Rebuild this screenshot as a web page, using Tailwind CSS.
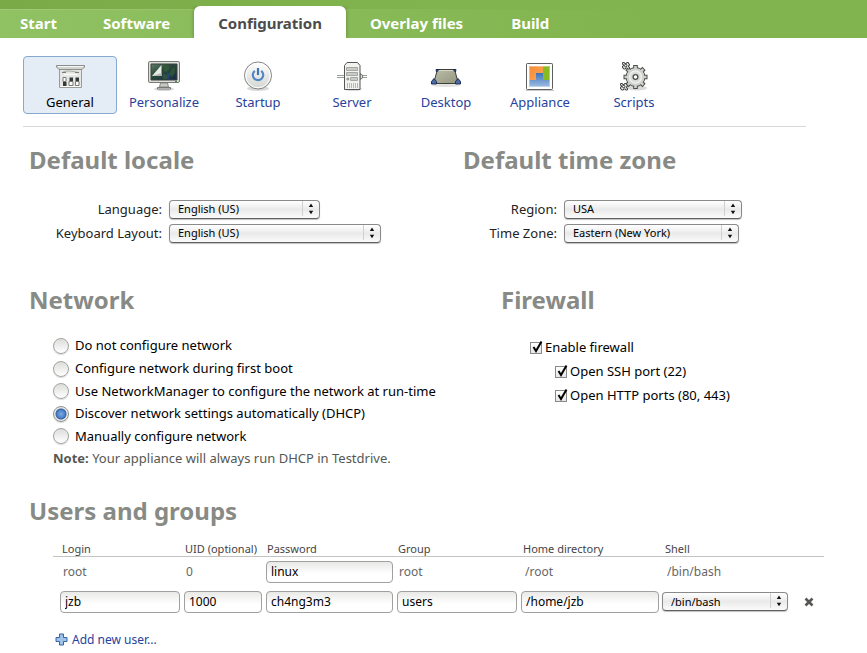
<!DOCTYPE html>
<html lang="en">
<head>
<meta charset="utf-8">
<title>Configuration</title>
<script src="https://cdn.jsdelivr.net/npm/@tailwindcss/browser@4"></script>
</head>
<body class="bg-white font-['Noto_Sans','Open_Sans',sans-serif] text-[13px] leading-5 text-black">
<svg class="hidden" aria-hidden="true">
  <defs>
    <symbol id="arrows" viewBox="0 0 18 18">
      <path d="M.5 1v15" stroke="#d0d0d0" fill="none"/>
      <path d="M9 3.500 11.200 7H6.800zM9 14.200 11.200 10.700H6.800z" fill="#111"/>
    </symbol>
    <symbol id="tick" viewBox="0 0 14 16">
      <path d="M3.500 8 6 12 11.500 2.500" stroke="#000" stroke-width="2" fill="none"/>
    </symbol>
  </defs>
</svg>

<header class="bg-linear-to-r from-[#7aaa48] to-[#81b44e] to-50% pt-[6px]">
  <nav class="flex h-8 overflow-hidden bg-[linear-gradient(to_right,#a0ca78,#81b44e_60%),linear-gradient(to_right,#90c163,#81b44e_75%)] bg-[size:100%_1px,100%_28px] bg-[position:0_3px,0_4px] bg-no-repeat pr-4 text-[15px] font-bold leading-[34px] text-white">
    <a href="#" class="pl-5 pr-[22px]">Start</a>
    <a href="#" class="px-6">Software</a>
    <a href="#" aria-current="page" class="rounded-t-md bg-white px-6 text-[#4c4c4c] shadow-[0_0_4px_rgba(0,0,0,0.3)]">Configuration</a>
    <a href="#" class="px-6">Overlay files</a>
    <a href="#" class="px-6">Build</a>
  </nav>
</header>

<main>
  <div class="ml-[23px] mr-[61px] flex border-b border-[#d8d8d8] pb-3 pt-[18px] text-center text-[#26429b]">
    <a href="#" aria-current="page" class="flex h-[58px] w-[94px] flex-col items-center rounded border border-[#86a9d2] bg-[#e4ecf6] pt-[3px] text-black">
      <svg class="size-8 shrink-0" viewBox="0 0 32 32" fill="none">
        <path d="M5.500 8.500h22v19h-22z" fill="#e6e7e5" stroke="#9a9c98"/>
        <path d="M6.500 26.500h20" stroke="#fff"/>
        <path d="M2.500 5.500h28v1.500l-2.500 2.500H5L2.500 7z" fill="#d2d4d0" stroke="#8c8e8a"/>
        <path d="M4 6.500h25" stroke="#f6f6f6"/>
        <path d="M8 12.500q4-2 8-1.500t9 1.500" stroke="#aaaca8"/>
        <path d="M8 12.500h4M21 12.500h4" stroke="#7c7e7a"/>
        <path d="M10 14.500h13" stroke="#fff"/>
        <path d="M9 17.500h3v4H9zM15 21.500h4v4h-4zM21.500 21.500h3.500v4h-3.500z" fill="#fff" stroke="#777975"/>
        <path d="M9 22h3.500v4H9zM15.500 17.500H19V21h-3.500zM21.500 17.500H25V21h-3.500z" fill="#33383a"/>
      </svg>
      <span class="leading-5">General</span>
    </a>
    <a href="#" class="flex h-[58px] w-[94px] flex-col items-center pt-1">
      <svg class="size-8 shrink-0" viewBox="0 0 32 32" fill="none">
        <defs><linearGradient id="scr" x2="1" y2="1"><stop stop-color="#5f7f68"/><stop offset=".4" stop-color="#2a4a3a"/><stop offset="1" stop-color="#172a4a"/></linearGradient></defs>
        <ellipse cx="16" cy="29" rx="10" ry="2" fill="#000" opacity=".15"/>
        <path d="M12.500 23h7l1 4h-9z" fill="#c8cac6" stroke="#888a85"/>
        <path d="M9.500 27.500h13v1.500h-13z" fill="#eee" stroke="#777975"/>
        <rect x=".5" y="1.500" width="31" height="21" rx="1.500" fill="#dcdeda" stroke="#777975"/>
        <path d="M3 4h26v16H3z" fill="url(#scr)" stroke="#3b423e"/>
        <path d="m16 7 3-2 3 2-2 4-4 1zM23 10l4-3v6l-3 4-3-3zM15 14l4 1v4h-4z" fill="#3b6238" opacity=".6"/>
        <path d="m19 13 3 1-1 5h-2z" fill="#234d8d" opacity=".7"/>
        <path d="M4 16 13.500 5v11z" fill="#e9ebe7"/>
        <path d="M4 16 13.500 13v3z" fill="#b4b8b1"/>
        <path d="M27 21.500h2" stroke="#4b8a2a"/>
      </svg>
      <span class="leading-5">Personalize</span>
    </a>
    <a href="#" class="flex h-[58px] w-[94px] flex-col items-center pt-1">
      <svg class="size-8 shrink-0" viewBox="0 0 32 32" fill="none">
        <defs><linearGradient id="btn" x2="0" y2="1"><stop stop-color="#fff"/><stop offset="1" stop-color="#d3d5d1"/></linearGradient></defs>
        <ellipse cx="16" cy="28.500" rx="11" ry="2.500" fill="#000" opacity=".15"/>
        <circle cx="16" cy="15.500" r="13.500" fill="url(#btn)" stroke="#7f817d"/>
        <circle cx="16" cy="15.500" r="12.300" stroke="#fff"/>
        <path d="M12.800 10.800a5.200 5.200 0 1 0 6.400 0" stroke="#5087c4" stroke-width="2.200"/>
        <path d="M16 8v7" stroke="#3f77b8" stroke-width="2.200"/>
      </svg>
      <span class="leading-5">Startup</span>
    </a>
    <a href="#" class="flex h-[58px] w-[94px] flex-col items-center pt-1">
      <svg class="size-8 shrink-0" viewBox="0 0 32 32" fill="none">
        <ellipse cx="17" cy="29" rx="9" ry="2" fill="#000" opacity=".15"/>
        <path d="M1 15.500h8M1 17.500h8M24 15.500h7M24 17.500h7" stroke="#9a9c98"/>
        <path d="M24 13.500l2.500 1.500v3L24 19.500z" fill="#ddd" stroke="#777975"/>
        <path d="M8.500 5.500 11 2.500h10.500l2.500 3v24H8.500z" fill="#f2f3f1" stroke="#555753"/>
        <path d="M10.500 7.500h11v3h-11zM10.500 12.500h11v3h-11zM14.500 17.500h7v3h-7z" fill="#c9cbc8" stroke="#a5a7a3"/>
        <circle cx="11.800" cy="19" r="1" fill="#fff" stroke="#777"/>
        <path d="M11.500 23v5M13.500 23v5M15.500 23v5M17.500 23v5M19.500 23v5M21.500 23v5" stroke="#b5b7b3"/>
      </svg>
      <span class="leading-5">Server</span>
    </a>
    <a href="#" class="flex h-[58px] w-[94px] flex-col items-center pt-1">
      <svg class="size-8 shrink-0" viewBox="0 0 32 32" fill="none">
        <defs><linearGradient id="desk" x2="1" y2="1"><stop stop-color="#bcbea9"/><stop offset="1" stop-color="#93957f"/></linearGradient></defs>
        <ellipse cx="16" cy="25.500" rx="14" ry="1.500" fill="#000" opacity=".12"/>
        <path d="M7.500 9.500h17l4 14h-25z" fill="url(#desk)" stroke="#3c3e38"/>
        <path d="M8.500 10.500h15" stroke="#d4d6c8"/>
        <path d="M6 9.500h3L6.500 12zM26 9.500h-3l2.500 2.500z" fill="#3f5f98" stroke="#1c2c52"/>
        <path d="M1.500 24v-2.500L4 18.500l2.500 3V24zM30.500 24v-2.500L28 18.500l-2.500 3V24z" fill="#4a6ba6" stroke="#1c2c52"/>
      </svg>
      <span class="leading-5">Desktop</span>
    </a>
    <a href="#" class="flex h-[58px] w-[94px] flex-col items-center pt-1">
      <svg class="size-8 shrink-0" viewBox="0 0 32 32" fill="none">
        <defs>
          <linearGradient id="org" x2="1" y2="1"><stop stop-color="#f68c35"/><stop offset="1" stop-color="#fcb36b"/></linearGradient>
          <linearGradient id="blu" x2="0" y2="1"><stop stop-color="#3e73b5"/><stop offset="1" stop-color="#9dbde3"/></linearGradient>
        </defs>
        <path d="M2 30.500h28" stroke="#000" opacity=".2"/>
        <rect x="2.500" y="3.500" width="26" height="26" rx=".8" fill="#fff" stroke="#5d5f5b"/>
        <path d="M5 6h21v21H5z" fill="url(#org)"/>
        <path d="M19 6h7v15h-7z" fill="#87bb22"/>
        <path d="M5 20h7v-7h7v7h7v7H5z" fill="url(#blu)"/>
        <path d="M5.500 6.500h20v20h-20z" stroke="#fff" opacity=".35"/>
      </svg>
      <span class="leading-5">Appliance</span>
    </a>
    <a href="#" class="flex h-[58px] w-[94px] flex-col items-center pt-1">
      <svg class="size-8 shrink-0" viewBox="0 0 32 32" fill="none">
        <ellipse cx="19" cy="28" rx="10" ry="2.500" fill="#000" opacity=".15"/>
        <g stroke="#4a4c48" stroke-width="4.600">
          <path id="spokes" d="M17.500 5v24M5.500 17h24M9 8.500l17 17M26 8.500l-17 17"/>
        </g>
        <circle cx="17.500" cy="17" r="9.500" fill="#cfd1cd" stroke="#4a4c48"/>
        <path d="M17.500 6v22M6.500 17h22M9.700 9.200l15.600 15.600M25.300 9.200 9.700 24.800" stroke="#cfd1cd" stroke-width="2.600"/>
        <circle cx="17.500" cy="17" r="6" fill="#d9dbd7" stroke="#efefee" stroke-width="1.500"/>
        <circle cx="17.500" cy="17" r="2.400" fill="#fff" stroke="#4a4c48" stroke-width="1.300"/>
        <g id="cog">
          <path d="M4.500 2.500h2v1h2v-1h2v1.500h1v1.500h-1v1.500h1v2h-2v-1h-2v1h-2v-1h-1V6h1V4.500h-1z" fill="#e6e7e5" stroke="#4a4c48"/>
          <circle cx="7.700" cy="5.600" r="1.200" fill="#fff" stroke="#222" stroke-width=".9"/>
        </g>
        <use href="#cog" x="-2" y="21"/>
      </svg>
      <span class="leading-5">Scripts</span>
    </a>
  </div>

  <div class="grid grid-cols-[434fr_404fr] pl-[29px] pt-[19px]">
    <section>
      <h2 class="text-2xl font-bold leading-7 text-[#888a85]">Default locale</h2>
      <form class="mt-[23px] grid grid-cols-[133px_auto] items-center justify-start gap-x-[7px] text-[#222]">
        <label for="lang" class="text-right leading-6">Language:</label>
        <span class="relative w-[151px]">
          <select id="lang" class="block h-[19px] w-full appearance-none rounded border border-[#8a8a8a] border-b-[#5f5f5f] bg-linear-to-b from-white via-[#eaeaea] to-[#fbfbfb] pl-2 text-[11px] leading-4 text-black shadow-[0_1px_1px_rgba(0,0,0,0.25)]"><option>English (US)</option></select>
          <svg class="pointer-events-none absolute right-0 top-0 size-[18px]"><use href="#arrows"/></svg>
        </span>
        <label for="kbd" class="text-right leading-6">Keyboard Layout:</label>
        <span class="relative w-[212px]">
          <select id="kbd" class="block h-[19px] w-full appearance-none rounded border border-[#8a8a8a] border-b-[#5f5f5f] bg-linear-to-b from-white via-[#eaeaea] to-[#fbfbfb] pl-2 text-[11px] leading-4 text-black shadow-[0_1px_1px_rgba(0,0,0,0.25)]"><option>English (US)</option></select>
          <svg class="pointer-events-none absolute right-0 top-0 size-[18px]"><use href="#arrows"/></svg>
        </span>
      </form>
    </section>
    <section>
      <h2 class="text-2xl font-bold leading-7 text-[#888a85]">Default time zone</h2>
      <form class="mt-[23px] grid grid-cols-[94px_auto] items-center justify-start gap-x-[7px] text-[#222]">
        <label for="region" class="text-right leading-6">Region:</label>
        <span class="relative w-[178px]">
          <select id="region" class="block h-[19px] w-full appearance-none rounded border border-[#8a8a8a] border-b-[#5f5f5f] bg-linear-to-b from-white via-[#eaeaea] to-[#fbfbfb] pl-2 text-[11px] leading-4 text-black shadow-[0_1px_1px_rgba(0,0,0,0.25)]"><option>USA</option></select>
          <svg class="pointer-events-none absolute right-0 top-0 size-[18px]"><use href="#arrows"/></svg>
        </span>
        <label for="tz" class="text-right leading-6">Time Zone:</label>
        <span class="relative w-[175px]">
          <select id="tz" class="block h-[19px] w-full appearance-none rounded border border-[#8a8a8a] border-b-[#5f5f5f] bg-linear-to-b from-white via-[#eaeaea] to-[#fbfbfb] pl-2 text-[11px] leading-4 text-black shadow-[0_1px_1px_rgba(0,0,0,0.25)]"><option>Eastern (New York)</option></select>
          <svg class="pointer-events-none absolute right-0 top-0 size-[18px]"><use href="#arrows"/></svg>
        </span>
      </form>
    </section>
  </div>

  <div class="grid grid-cols-[472fr_366fr] pl-[29px] pt-[41px]">
    <section>
      <h2 class="text-2xl font-bold leading-7 text-[#888a85]">Network</h2>
      <form class="ml-6 mt-5 leading-[23px]">
        <label class="flex items-center gap-[6px]"><input type="radio" name="net" class="size-4 appearance-none rounded-full border border-[#a3a5a1] bg-linear-to-b from-[#dcdedb] to-white shadow-[0_1px_1px_rgba(0,0,0,0.15)]">Do not configure network</label>
        <label class="flex items-center gap-[6px]"><input type="radio" name="net" class="size-4 appearance-none rounded-full border border-[#a3a5a1] bg-linear-to-b from-[#dcdedb] to-white shadow-[0_1px_1px_rgba(0,0,0,0.15)]">Configure network during first boot</label>
        <label class="flex items-center gap-[6px] leading-[22px]"><input type="radio" name="net" class="size-4 appearance-none rounded-full border border-[#a3a5a1] bg-linear-to-b from-[#dcdedb] to-white shadow-[0_1px_1px_rgba(0,0,0,0.15)]">Use NetworkManager to configure the network at run-time</label>
        <label class="flex items-center gap-[6px]"><input type="radio" name="net" checked class="size-4 appearance-none rounded-full border border-[#8f918d] bg-[radial-gradient(circle,#7fabe2_0,#4a7fc8_4px,#34609f_5px,#e8eae7_6px)] shadow-[0_1px_1px_rgba(0,0,0,0.15)]">Discover network settings automatically (DHCP)</label>
        <label class="flex items-center gap-[6px] leading-[22px]"><input type="radio" name="net" class="size-4 appearance-none rounded-full border border-[#a3a5a1] bg-linear-to-b from-[#dcdedb] to-white shadow-[0_1px_1px_rgba(0,0,0,0.15)]">Manually configure network</label>
        <p class="text-[#555753]"><b>Note:</b> Your appliance will always run DHCP in Testdrive.</p>
      </form>
    </section>
    <section>
      <h2 class="text-2xl font-bold leading-7 text-[#888a85]">Firewall</h2>
      <form class="ml-[29px] mt-[21px] leading-6">
        <label class="flex items-center gap-px"><span class="relative flex items-center"><input type="checkbox" checked class="peer mr-[2px] mt-px size-3 appearance-none border border-[#8a8a8a] bg-linear-to-b from-white to-[#e6e6e6]"><svg class="pointer-events-none invisible absolute -top-[2px] left-0 h-4 w-[14px] peer-checked:visible"><use href="#tick"/></svg></span>Enable firewall</label>
        <label class="ml-[25px] flex items-center gap-px"><span class="relative flex items-center"><input type="checkbox" checked class="peer mr-[2px] mt-px size-3 appearance-none border border-[#8a8a8a] bg-linear-to-b from-white to-[#e6e6e6]"><svg class="pointer-events-none invisible absolute -top-[2px] left-0 h-4 w-[14px] peer-checked:visible"><use href="#tick"/></svg></span>Open SSH port (22)</label>
        <label class="ml-[25px] flex items-center gap-px"><span class="relative flex items-center"><input type="checkbox" checked class="peer mr-[2px] mt-px size-3 appearance-none border border-[#8a8a8a] bg-linear-to-b from-white to-[#e6e6e6]"><svg class="pointer-events-none invisible absolute -top-[2px] left-0 h-4 w-[14px] peer-checked:visible"><use href="#tick"/></svg></span>Open HTTP ports (80, 443)</label>
      </form>
    </section>
  </div>

  <section class="pl-[29px] pr-[43px] pt-[27px]">
    <h2 class="text-2xl font-bold leading-7 text-[#888a85]">Users and groups</h2>
    <div class="ml-6 mt-4">
      <table class="w-full table-fixed text-xs text-[#666]">
        <colgroup>
          <col class="w-[129px]"><col class="w-[82px]"><col class="w-[131px]"><col class="w-[124px]"><col class="w-[142px]"><col class="w-[129px]"><col class="w-[34px]">
        </colgroup>
        <thead>
          <tr class="whitespace-nowrap border-b border-[#c3c3c3] text-left text-[11px] leading-[15px] text-[#444]">
            <th scope="col" class="pl-[9px] font-normal">Login</th>
            <th scope="col" class="pl-[3px] font-normal">UID (optional)</th>
            <th scope="col" class="pl-[3px] font-normal">Password</th>
            <th scope="col" class="pl-[3px] font-normal">Group</th>
            <th scope="col" class="pl-1 font-normal">Home directory</th>
            <th scope="col" class="pl-1 font-normal">Shell</th>
            <td></td>
          </tr>
        </thead>
        <tbody>
          <tr class="h-[30px]">
            <td class="pl-[10px]">root</td>
            <td class="pl-1">0</td>
            <td class="px-[2px]"><input aria-label="Password for root" value="linux" class="block h-[22px] w-full rounded border border-[#a0a0a0] bg-linear-to-b from-[#e9e9e8] to-white to-60% px-1 text-xs text-black"></td>
            <td class="pl-1">root</td>
            <td class="pl-[6px]">/root</td>
            <td class="pl-[6px]">/bin/bash</td>
            <td></td>
          </tr>
          <tr class="h-[30px]">
            <td class="pl-[7px] pr-[2px]"><input aria-label="Login" value="jzb" class="block h-[22px] w-full rounded border border-[#a0a0a0] bg-linear-to-b from-[#e9e9e8] to-white to-60% px-1 text-xs text-black"></td>
            <td class="px-[2px]"><input aria-label="UID" value="1000" class="block h-[22px] w-full rounded border border-[#a0a0a0] bg-linear-to-b from-[#e9e9e8] to-white to-60% px-1 text-xs text-black"></td>
            <td class="px-[2px]"><input aria-label="Password" value="ch4ng3m3" class="block h-[22px] w-full rounded border border-[#a0a0a0] bg-linear-to-b from-[#e9e9e8] to-white to-60% px-1 text-xs text-black"></td>
            <td class="px-[2px]"><input aria-label="Group" value="users" class="block h-[22px] w-full rounded border border-[#a0a0a0] bg-linear-to-b from-[#e9e9e8] to-white to-60% px-1 text-xs text-black"></td>
            <td class="px-[2px]"><input aria-label="Home directory" value="/home/jzb" class="block h-[22px] w-full rounded border border-[#a0a0a0] bg-linear-to-b from-[#e9e9e8] to-white to-60% px-1 text-xs text-black"></td>
            <td class="pl-px pr-[2px]">
              <span class="relative block">
                <select aria-label="Shell" class="block h-[19px] w-full appearance-none rounded border border-[#8a8a8a] border-b-[#5f5f5f] bg-linear-to-b from-white via-[#eaeaea] to-[#fbfbfb] pl-2 text-[11px] leading-4 text-black shadow-[0_1px_1px_rgba(0,0,0,0.25)]"><option>/bin/bash</option></select>
                <svg class="pointer-events-none absolute right-0 top-0 size-[18px]"><use href="#arrows"/></svg>
              </span>
            </td>
            <td class="pl-[14px]"><button type="button" aria-label="Remove user" class="block"><svg class="size-[10px]" viewBox="0 0 10 10"><path d="M1.500 1.500l7 7M8.500 1.500l-7 7" stroke="#555753" stroke-width="2.600"/></svg></button></td>
          </tr>
        </tbody>
      </table>
      <a href="#" class="ml-[2px] mt-[13px] inline-flex items-center gap-1 text-xs leading-5 text-[#26429b]">
        <svg class="size-[13px]" viewBox="0 0 13 13"><path d="M4.500 1h4v3.500H12v4H8.500V12h-4V8.500H1v-4h3.500z" fill="#9fc3e8" stroke="#3465a4"/></svg>
        Add new user...
      </a>
    </div>
  </section>
</main>
</body>
</html>
